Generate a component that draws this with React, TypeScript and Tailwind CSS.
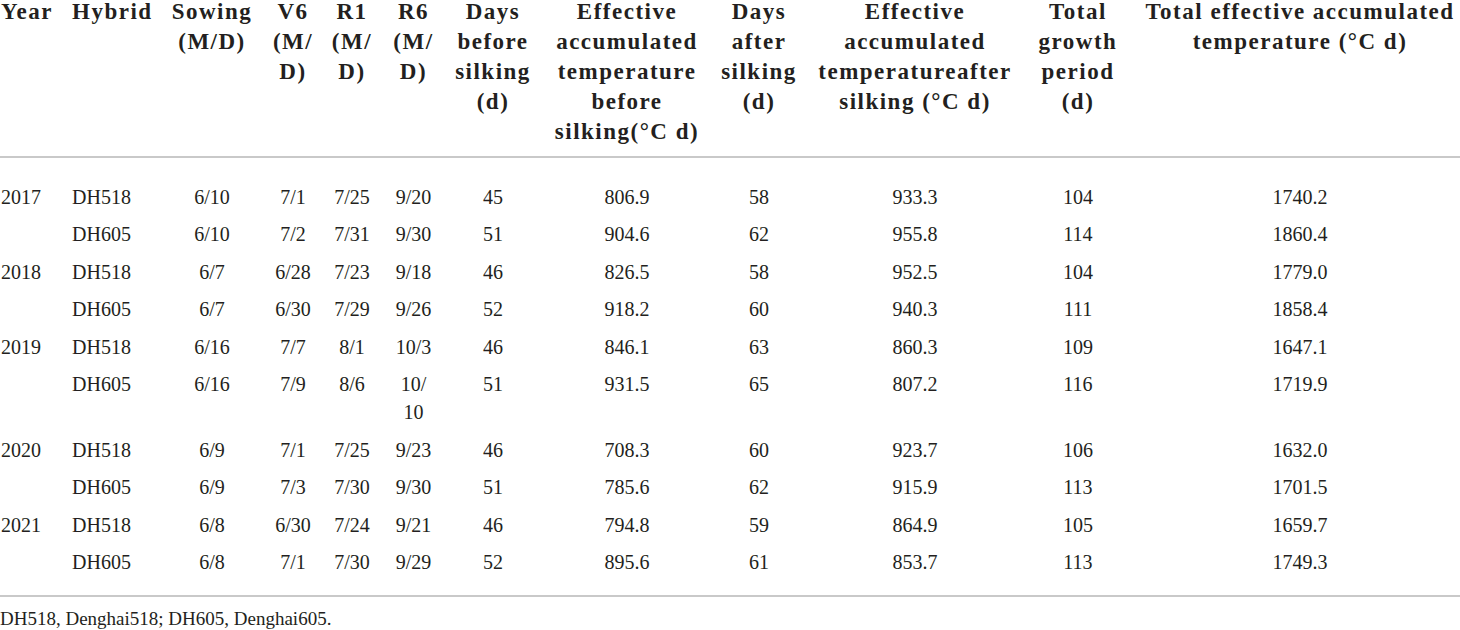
const grid =
  "grid grid-cols-[62px_89px_122px_40px_78px_45px_114px_154px_110px_202px_124px_320px]";

type Col = { lines: string[]; left?: boolean; pad?: string };

const headers: Col[] = [
  { lines: ["Year"], left: true, pad: "pl-[1px]" },
  { lines: ["Hybrid"], left: true, pad: "pl-[10px]" },
  { lines: ["Sowing", "(M/D)"] },
  { lines: ["V6", "(M/", "D)"] },
  { lines: ["R1", "(M/", "D)"] },
  { lines: ["R6", "(M/", "D)"] },
  { lines: ["Days", "before", "silking", "(d)"] },
  { lines: ["Effective", "accumulated", "temperature", "before", "silking(°C d)"] },
  { lines: ["Days", "after", "silking", "(d)"] },
  { lines: ["Effective", "accumulated", "temperatureafter", "silking (°C d)"] },
  { lines: ["Total", "growth", "period", "(d)"] },
  { lines: ["Total effective accumulated", "temperature (°C d)"] },
];

type Row = { year: string; hybrid: string; cells: (string | string[])[] };

const rows: Row[] = [
  { year: "2017", hybrid: "DH518", cells: ["6/10", "7/1", "7/25", "9/20", "45", "806.9", "58", "933.3", "104", "1740.2"] },
  { year: "", hybrid: "DH605", cells: ["6/10", "7/2", "7/31", "9/30", "51", "904.6", "62", "955.8", "114", "1860.4"] },
  { year: "2018", hybrid: "DH518", cells: ["6/7", "6/28", "7/23", "9/18", "46", "826.5", "58", "952.5", "104", "1779.0"] },
  { year: "", hybrid: "DH605", cells: ["6/7", "6/30", "7/29", "9/26", "52", "918.2", "60", "940.3", "111", "1858.4"] },
  { year: "2019", hybrid: "DH518", cells: ["6/16", "7/7", "8/1", "10/3", "46", "846.1", "63", "860.3", "109", "1647.1"] },
  { year: "", hybrid: "DH605", cells: ["6/16", "7/9", "8/6", ["10/", "10"], "51", "931.5", "65", "807.2", "116", "1719.9"] },
  { year: "2020", hybrid: "DH518", cells: ["6/9", "7/1", "7/25", "9/23", "46", "708.3", "60", "923.7", "106", "1632.0"] },
  { year: "", hybrid: "DH605", cells: ["6/9", "7/3", "7/30", "9/30", "51", "785.6", "62", "915.9", "113", "1701.5"] },
  { year: "2021", hybrid: "DH518", cells: ["6/8", "6/30", "7/24", "9/21", "46", "794.8", "59", "864.9", "105", "1659.7"] },
  { year: "", hybrid: "DH605", cells: ["6/8", "7/1", "7/30", "9/29", "52", "895.6", "61", "853.7", "113", "1749.3"] },
];

function Cell({ lines, left, pad }: Col) {
  return (
    <div className={`flex flex-col ${left ? "items-start" : "items-center"} ${pad ?? ""}`}>
      {lines.map((l, i) => (
        <span key={i} className="whitespace-nowrap">
          {l}
        </span>
      ))}
    </div>
  );
}

export default function App() {
  return (
    <div
      className="w-[1460px] h-[630px] overflow-hidden bg-white text-[#231f20]"
      style={{ fontFamily: '"Liberation Serif", "Times New Roman", serif' }}
    >
      {/* header */}
      <div className={`${grid} -mt-[3px] h-[159px] text-[23px] leading-[30px] font-bold tracking-[1.5px]`}>
        {headers.map((h, i) => (
          <Cell key={i} {...h} />
        ))}
      </div>
      <div className="h-[2px] bg-[#c9c9c9]" />

      {/* body */}
      <div className="pt-[20px] pb-[14px] text-[20px] leading-[28px]">
        {rows.map((r, i) => (
          <div key={i} className={`${grid} py-[4.75px]`}>
            <Cell lines={[r.year]} left pad="pl-[1px]" />
            <Cell lines={[r.hybrid]} left pad="pl-[10px]" />
            {r.cells.map((c, j) => (
              <Cell key={j} lines={Array.isArray(c) ? c : [c]} />
            ))}
          </div>
        ))}
      </div>
      <div className="h-[2px] bg-[#c9c9c9]" />

      <div className="mt-[8px] text-[19px] leading-[28px]">DH518, Denghai518; DH605, Denghai605.</div>
    </div>
  );
}
